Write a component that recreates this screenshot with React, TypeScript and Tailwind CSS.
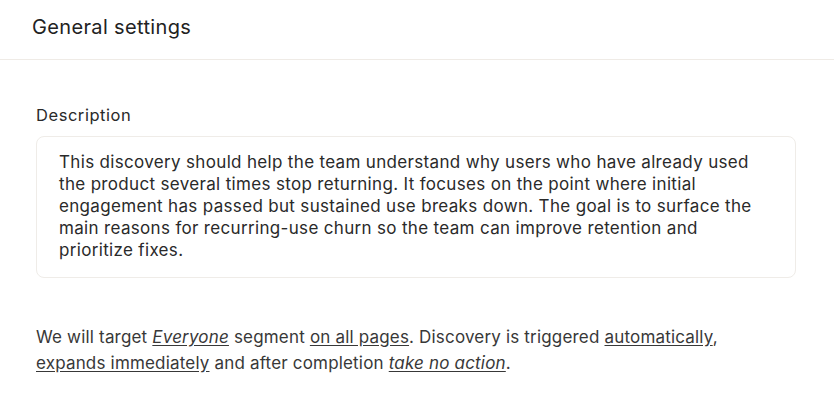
import React from "react";

export default function App() {
  return (
    <div className="min-h-[405px] w-full bg-white text-[#262626]" style={{ fontFamily: "Inter, 'Noto Sans', sans-serif" }}>
      <div className="h-[60px] border-b border-[#efebe6] px-8 pb-[6px] flex items-center">
        <h1 className="text-[20px] font-normal tracking-[0.35px] text-[#222]">General settings</h1>
      </div>
      <div className="pl-9 pr-[38px] pt-[44px]">
        <div className="text-[16.5px] leading-[22px] tracking-[0.55px] text-[#2a2a2a]">Description</div>
        <div className="mt-[10px] rounded-lg border border-[#efece8] px-[22px] pt-[14px] pb-[16px] text-[17px] leading-[22px] tracking-[0.33px] text-[#2a2a2a]">
          This discovery should help the team understand why users who have already used the product several times stop returning. It focuses on the point where initial engagement has passed but sustained use breaks down. The goal is to surface the main reasons for recurring-use churn so the team can improve retention and prioritize fixes.
        </div>
        <p className="mt-[46px] text-[17px] leading-[26px] tracking-[0.18px] text-[#383838]">
          We will target <span className="italic underline underline-offset-2">Everyone</span> segment{" "}
          <span className="underline underline-offset-2">on all pages</span>. Discovery is triggered{" "}
          <span className="underline underline-offset-2">automatically</span>,<br />
          <span className="underline underline-offset-2">expands immediately</span> and after completion{" "}
          <span className="italic underline underline-offset-2">take no action</span>.
        </p>
      </div>
    </div>
  );
}
